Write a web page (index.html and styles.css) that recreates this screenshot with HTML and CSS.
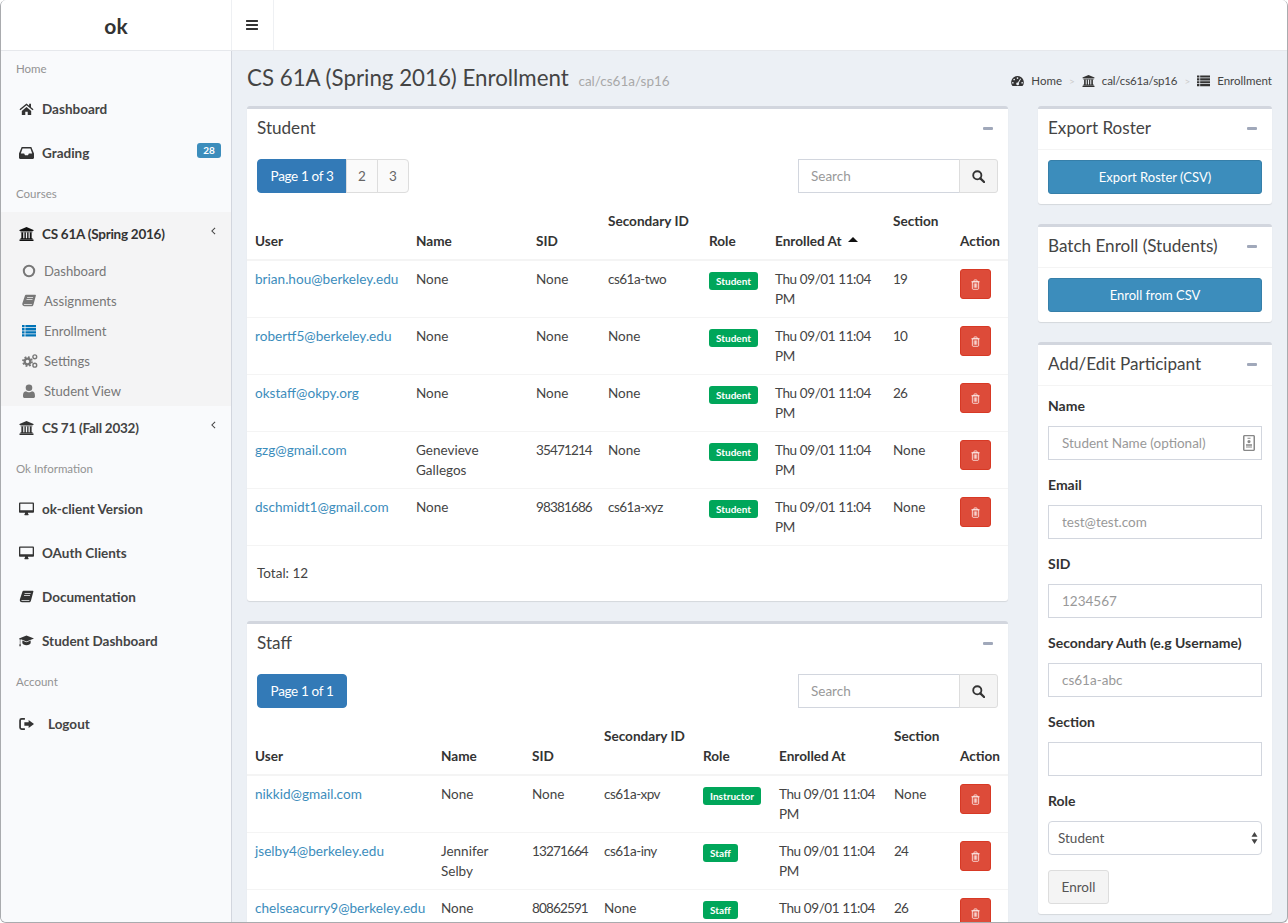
FILE: index.html
```html
<!DOCTYPE html>
<html lang="en">
<head>
<meta charset="utf-8">
<title>CS 61A Enrollment</title>
<link rel="stylesheet" href="styles.css">
</head>
<body>
<svg class="sprite" aria-hidden="true">
  <symbol id="i-bars" viewBox="0 0 1536 1792"><path d="M1536 1344v128q0 26-19 45t-45 19H64q-26 0-45-19t-19-45v-128q0-26 19-45t45-19h1408q26 0 45 19t19 45zm0-512v128q0 26-19 45t-45 19H64q-26 0-45-19T0 960V832q0-26 19-45t45-19h1408q26 0 45 19t19 45zm0-512v128q0 26-19 45t-45 19H64q-26 0-45-19T0 448V320q0-26 19-45t45-19h1408q26 0 45 19t19 45z"/></symbol>
  <symbol id="i-home" viewBox="0 0 16 14"><path d="M8 1 .5 7.3l1 1.1L8 3l6.5 5.4 1-1.1-2.7-2.2V1.5h-2v1.9L8 1zM3 9.2v4.3h3.7V10h2.6v3.5H13V9.2L8 4.9 3 9.2z"/></symbol>
  <symbol id="i-inbox" viewBox="0 0 14 12"><path fill-rule="evenodd" d="M2.5.5h9L14 6.5v4a1 1 0 0 1-1 1H1a1 1 0 0 1-1-1v-4L2.500.5zM3.300 1.800 1.700 6.500h3.100l.8 1.600h2.800l.8-1.600h3.100l-1.600-4.700H3.300z"/></symbol>
  <symbol id="i-bank" viewBox="0 0 16 15"><path d="M8 0l7.500 3.200v1H.5v-1L8 0zM1.500 4.700h13v1h-13zM2.500 6h2v6h-2zM5.800 6h1.500v6H5.800zM8.700 6h1.500v6H8.700zM11.500 6h2v6h-2zM1.500 12h13v1.100h-13zM.5 13.500h15V15H.5z"/></symbol>
  <symbol id="i-circle" viewBox="0 0 14 14"><circle cx="7" cy="7" r="5.200" fill="none" stroke="currentColor" stroke-width="2"/></symbol>
  <symbol id="i-book" viewBox="0 0 14 14"><path fill-rule="evenodd" d="M4 .8h9.300c.5 0 .7.400.6.800l-2.400 8.800c-.3 1.200-1 1.900-2.200 1.900H2.600C1 12.300-.1 11 .4 9.300L2.900 1.700C3.100 1.100 3.500.8 4 .8zM5.200 3l-.2.800h6l.2-.8h-6zM4.600 5l-.2.800h6l.2-.8h-6zM2.300 10.200c-.5 0-.7.900 0 .9h7.400l.3-.9H2.300z"/></symbol>
  <symbol id="i-list" viewBox="0 0 14 12"><path d="M0 0h2.600v2.300H0zM3.400 0H14v2.300H3.400zM0 3.100h2.600v2.300H0zM3.400 3.100H14v2.300H3.400zM0 6.200h2.600v2.300H0zM3.400 6.200H14v2.300H3.400zM0 9.300h2.600v2.300H0zM3.400 9.300H14v2.300H3.400z"/></symbol>
  <symbol id="i-cogs" viewBox="0 0 16 14"><g fill="none" stroke="currentColor"><circle cx="5.500" cy="7.500" r="2.800" stroke-width="2.200"/><circle cx="5.500" cy="7.500" r="4.500" stroke-width="1.800" stroke-dasharray="1.800 1.730"/><circle cx="12.800" cy="2.800" r="1.900" stroke-width="1.400"/><circle cx="12.800" cy="11.200" r="1.900" stroke-width="1.400"/></g></symbol>
  <symbol id="i-user" viewBox="0 0 12 14"><circle cx="6" cy="3.700" r="3.300"/><path d="M1.800 14C.6 14 0 13.300 0 12.200 0 9.700.5 7.300 3.100 7.200c.7.700 1.800 1.100 2.900 1.100s2.200-.4 2.900-1.100C11.500 7.300 12 9.700 12 12.200c0 1.100-.6 1.800-1.800 1.800H1.800z"/></symbol>
  <symbol id="i-desktop" viewBox="0 0 16 14"><path fill-rule="evenodd" d="M1.200 0h13.600c.7 0 1.200.5 1.200 1.200v8.600c0 .7-.5 1.200-1.200 1.200H9.500c0 1 .8 1.600.8 2.100 0 .3-.3.5-.5.5H6.200c-.3 0-.5-.2-.5-.5 0-.5.8-1.100.8-2.100H1.200C.5 11 0 10.500 0 9.800V1.200C0 .5.5 0 1.200 0zm.2 1.400v6.800h13.200V1.400H1.400z"/></symbol>
  <symbol id="i-cap" viewBox="0 0 18 13"><path d="M9 0l9 3.500L9 7 2.300 4.400 1.600 5v5.200H1V4.900l-1-1.400L9 0zM4 6l5 2 5-2v3c0 1.500-2.500 2.500-5 2.500S4 10.500 4 9V6zM.7 10.200h1.200l.3 2.500H.4l.3-2.500z"/></symbol>
  <symbol id="i-signout" viewBox="0 0 14 12"><path d="M9 2.300 14 6 9 9.700V7.600H5V4.400h4V2.300z"/><path d="M5.500 1.200h-3c-1 0-1.500.5-1.500 1.500v6.600c0 1 .5 1.500 1.500 1.500h3" fill="none" stroke="currentColor" stroke-width="1.600"/></symbol>
  <symbol id="i-gauge" viewBox="0 0 14 12"><path fill-rule="evenodd" d="M7 .5a6.900 6.900 0 0 0-5.400 11h10.800A6.900 6.900 0 0 0 7 .5zM7 2a.9.9 0 1 1 0 1.800A.9.900 0 0 1 7 2zM3.400 3.500a.9.900 0 1 1 0 1.800.9.900 0 0 1 0-1.800zM2 7a.9.900 0 1 1 0 1.800A.9.900 0 0 1 2 7zm10 0a.9.900 0 1 1 0 1.800A.9.900 0 0 1 12 7zM10 3.400l.8.500-2.500 4.200a1.500 1.500 0 1 1-.9-.5L10 3.400z"/></symbol>
  <symbol id="i-search" viewBox="0 0 14 14"><circle cx="5.700" cy="5.700" r="4.400" fill="none" stroke="currentColor" stroke-width="2"/><path d="M9 9l4 4" stroke="currentColor" stroke-width="2.400" stroke-linecap="round"/></symbol>
  <symbol id="i-trash" viewBox="0 0 12 14"><path d="M1.800 3.500h8.400v8.700c0 .7-.4 1.200-1 1.200H2.800c-.6 0-1-.5-1-1.200V3.500zM.5 3.300h11M4 3V1.700c0-.5.300-.8.700-.8h2.600c.4 0 .7.300.7.800V3M4.300 5.500v5.800M6 5.500v5.800M7.700 5.500v5.800" fill="none" stroke="currentColor"/></symbol>
  <symbol id="i-contact" viewBox="0 0 12 16"><path fill-rule="evenodd" d="M1.500 0h9c.8 0 1.500.7 1.500 1.500v13c0 .8-.7 1.500-1.500 1.500h-9C.7 16 0 15.300 0 14.500v-13C0 .7.700 0 1.500 0zm0 1.300v13.400h9V1.300h-9z"/><path d="M4.500 2.800h3v1h-3zM6 5a1.600 1.600 0 1 1 0 3.200A1.600 1.600 0 0 1 6 5zM3 9.200h6v1.500H3zM3 11.500h6v1H3z"/></symbol>
</svg>

<div class="window">
  <header class="topbar">
    <div class="brand">ok</div>
    <button class="toggle" type="button"><svg class="ic ic-bars"><use href="#i-bars"/></svg></button>
  </header>
  <div class="shell">
    <nav class="sidebar">
      <div class="nav-label nav-label-first">Home</div>
      <a class="nav-item"><svg class="ic ic-nav"><use href="#i-home"/></svg><span>Dashboard</span></a>
      <a class="nav-item"><svg class="ic ic-nav"><use href="#i-inbox"/></svg><span>Grading</span><em class="count">28</em></a>
      <div class="nav-label">Courses</div>
      <div class="course-open">
        <a class="nav-item nav-item-dark"><svg class="ic ic-nav"><use href="#i-bank"/></svg><span class="course-name">CS 61A (Spring 2016)</span><svg class="chev" viewBox="0 0 6 10"><path d="M5 1 1 5l4 4"/></svg></a>
        <a class="sub-item"><svg class="ic ic-sub"><use href="#i-circle"/></svg><span>Dashboard</span></a>
        <a class="sub-item"><svg class="ic ic-sub"><use href="#i-book"/></svg><span>Assignments</span></a>
        <a class="sub-item"><svg class="ic ic-sub ic-blue"><use href="#i-list"/></svg><span>Enrollment</span></a>
        <a class="sub-item"><svg class="ic ic-sub ic-cogs"><use href="#i-cogs"/></svg><span>Settings</span></a>
        <a class="sub-item"><svg class="ic ic-sub"><use href="#i-user"/></svg><span>Student View</span></a>
      </div>
      <a class="nav-item"><svg class="ic ic-nav"><use href="#i-bank"/></svg><span class="course-name">CS 71 (Fall 2032)</span><svg class="chev" viewBox="0 0 6 10"><path d="M5 1 1 5l4 4"/></svg></a>
      <div class="nav-label">Ok Information</div>
      <a class="nav-item"><svg class="ic ic-nav"><use href="#i-desktop"/></svg><span>ok-client Version</span></a>
      <a class="nav-item"><svg class="ic ic-nav"><use href="#i-desktop"/></svg><span>OAuth Clients</span></a>
      <a class="nav-item"><svg class="ic ic-nav"><use href="#i-book"/></svg><span>Documentation</span></a>
      <a class="nav-item"><svg class="ic ic-nav"><use href="#i-cap"/></svg><span>Student Dashboard</span></a>
      <div class="nav-label nav-label-last">Account</div>
      <a class="nav-item nav-item-logout"><svg class="ic ic-nav"><use href="#i-signout"/></svg><span>Logout</span></a>
    </nav>

    <main class="content">
      <div class="page-head">
        <h1>CS 61A (Spring 2016) Enrollment <small>cal/cs61a/sp16</small></h1>
        <ol class="crumbs">
          <li><svg class="ic ic-crumb"><use href="#i-gauge"/></svg>Home</li>
          <li class="sep">&gt;</li>
          <li class="crumb-path"><svg class="ic ic-crumb"><use href="#i-bank"/></svg>cal/cs61a/sp16</li>
          <li class="sep">&gt;</li>
          <li><svg class="ic ic-crumb"><use href="#i-list"/></svg>Enrollment</li>
        </ol>
      </div>
      <div class="columns">
        <div class="col-main">
          <section class="card">
            <div class="card-head"><h2>Student</h2><span class="collapse"></span></div>
            <div class="tools">
              <div class="pager"><span class="pg pg-on">Page 1 of 3</span><span class="pg">2</span><span class="pg">3</span></div>
              <div class="search"><input type="text" placeholder="Search"><button type="button"><svg class="ic ic-search"><use href="#i-search"/></svg></button></div>
            </div>
            <table class="grid grid-student">
              <colgroup><col class="c1"><col class="c2"><col class="c3"><col class="c4"><col class="c5"><col class="c6"><col class="c7"><col class="c8"></colgroup>
              <thead><tr><th>User</th><th>Name</th><th>SID</th><th class="th-up">Secondary ID</th><th>Role</th><th>Enrolled At <i class="sort"></i></th><th class="th-up">Section</th><th>Action</th></tr></thead>
              <tbody>
                <tr><td><a>brian.hou@berkeley.edu</a></td><td>None</td><td>None</td><td class="sec">cs61a-two</td><td><b class="tag">Student</b></td><td class="when">Thu 09/01 11:04 PM</td><td class="num">19</td><td><button class="del" type="button"><svg class="ic ic-trash"><use href="#i-trash"/></svg></button></td></tr>
                <tr><td><a>robertf5@berkeley.edu</a></td><td>None</td><td>None</td><td>None</td><td><b class="tag">Student</b></td><td class="when">Thu 09/01 11:04 PM</td><td class="num">10</td><td><button class="del" type="button"><svg class="ic ic-trash"><use href="#i-trash"/></svg></button></td></tr>
                <tr><td><a>okstaff@okpy.org</a></td><td>None</td><td>None</td><td>None</td><td><b class="tag">Student</b></td><td class="when">Thu 09/01 11:04 PM</td><td class="num">26</td><td><button class="del" type="button"><svg class="ic ic-trash"><use href="#i-trash"/></svg></button></td></tr>
                <tr><td><a>gzg@gmail.com</a></td><td>Genevieve Gallegos</td><td class="num">35471214</td><td>None</td><td><b class="tag">Student</b></td><td class="when">Thu 09/01 11:04 PM</td><td>None</td><td><button class="del" type="button"><svg class="ic ic-trash"><use href="#i-trash"/></svg></button></td></tr>
                <tr><td><a>dschmidt1@gmail.com</a></td><td>None</td><td class="num">98381686</td><td class="sec">cs61a-xyz</td><td><b class="tag">Student</b></td><td class="when">Thu 09/01 11:04 PM</td><td>None</td><td><button class="del" type="button"><svg class="ic ic-trash"><use href="#i-trash"/></svg></button></td></tr>
              </tbody>
            </table>
            <div class="total">Total: 12</div>
          </section>

          <section class="card">
            <div class="card-head"><h2>Staff</h2><span class="collapse"></span></div>
            <div class="tools">
              <div class="pager"><span class="pg pg-on pg-solo">Page 1 of 1</span></div>
              <div class="search"><input type="text" placeholder="Search"><button type="button"><svg class="ic ic-search"><use href="#i-search"/></svg></button></div>
            </div>
            <table class="grid grid-staff">
              <colgroup><col class="c1"><col class="c2"><col class="c3"><col class="c4"><col class="c5"><col class="c6"><col class="c7"><col class="c8"></colgroup>
              <thead><tr><th>User</th><th>Name</th><th>SID</th><th class="th-up">Secondary ID</th><th>Role</th><th>Enrolled At</th><th class="th-up">Section</th><th>Action</th></tr></thead>
              <tbody>
                <tr><td><a>nikkid@gmail.com</a></td><td>None</td><td>None</td><td class="sec">cs61a-xpv</td><td><b class="tag">Instructor</b></td><td class="when">Thu 09/01 11:04 PM</td><td>None</td><td><button class="del" type="button"><svg class="ic ic-trash"><use href="#i-trash"/></svg></button></td></tr>
                <tr><td><a>jselby4@berkeley.edu</a></td><td>Jennifer Selby</td><td class="num">13271664</td><td class="sec">cs61a-iny</td><td><b class="tag">Staff</b></td><td class="when">Thu 09/01 11:04 PM</td><td class="num">24</td><td><button class="del" type="button"><svg class="ic ic-trash"><use href="#i-trash"/></svg></button></td></tr>
                <tr><td><a>chelseacurry9@berkeley.edu</a></td><td>None</td><td class="num">80862591</td><td>None</td><td><b class="tag">Staff</b></td><td class="when">Thu 09/01 11:04 PM</td><td class="num">26</td><td><button class="del" type="button"><svg class="ic ic-trash"><use href="#i-trash"/></svg></button></td></tr>
              </tbody>
            </table>
          </section>
        </div>

        <aside class="col-side">
          <section class="card">
            <div class="card-head card-head-line"><h2>Export Roster</h2><span class="collapse"></span></div>
            <div class="card-body"><button class="btn-blue" type="button">Export Roster (CSV)</button></div>
          </section>
          <section class="card">
            <div class="card-head card-head-line"><h2>Batch Enroll (Students)</h2><span class="collapse"></span></div>
            <div class="card-body"><button class="btn-blue" type="button">Enroll from CSV</button></div>
          </section>
          <section class="card">
            <div class="card-head card-head-line"><h2>Add/Edit Participant</h2><span class="collapse"></span></div>
            <form class="card-body form">
              <div class="field"><label>Name</label><div class="with-icon"><input type="text" placeholder="Student Name (optional)"><svg class="ic ic-contact"><use href="#i-contact"/></svg></div></div>
              <div class="field"><label>Email</label><input type="text" placeholder="test@test.com"></div>
              <div class="field"><label>SID</label><input type="text" placeholder="1234567"></div>
              <div class="field"><label>Secondary Auth (e.g Username)</label><input type="text" placeholder="cs61a-abc"></div>
              <div class="field"><label>Section</label><input type="text"></div>
              <div class="field"><label>Role</label><div class="with-icon"><select><option>Student</option></select><svg class="updown" viewBox="0 0 8 14"><path d="M4 0l3.500 5.500h-7zM4 14 .5 8.500h7z"/></svg></div></div>
              <button class="btn-plain" type="button">Enroll</button>
            </form>
          </section>
        </aside>
      </div>
    </main>
  </div>
</div>
</body>
</html>
```

FILE: styles.css
```css
* { box-sizing: border-box; }
html, body { margin: 0; height: 100%; overflow: hidden; }
body { background: #fff; font-family: "Lato", "Noto Sans", sans-serif; font-size: 14px; line-height: 20px; color: #444; }
a { color: inherit; text-decoration: none; }
.sprite { display: none; }
.ic { display: block; flex: none; fill: currentColor; }

.window { width: 1288px; height: 923px; display: flex; flex-direction: column; overflow: hidden; border: 1px solid #a9abae; border-width: 0 1px 1px; border-radius: 6px; background: #ecf0f5; }

.topbar { height: 51px; flex: none; display: flex; background: #fff; border-bottom: 1px solid #e6e8ec; }
.brand { width: 230px; text-align: center; font-size: 21px; font-weight: 700; line-height: 51px; color: #333; }
.toggle { width: 43px; padding: 0 1px 0 0; display: flex; align-items: center; justify-content: center; background: #fff; border: solid #eef0f3; border-width: 0 1px; color: #333; }
.ic-bars { width: 12px; height: 14px; }

.shell { flex: 1; display: flex; min-height: 0; }
.sidebar { width: 231px; flex: none; background: #f9fafc; border-right: 1px solid #d2d6de; }
.nav-label { height: 37px; padding-left: 15px; font-size: 11.500px; line-height: 37px; color: #939393; }
.nav-label-first { height: 36px; line-height: 36px; }
.nav-label-last { height: 39px; }
.nav-item { height: 44px; display: flex; align-items: center; padding: 0 10px 0 18px; font-size: 13.500px; font-weight: 700; color: #444; }
.nav-item-dark { color: #333; }
.nav-item-dark .ic { color: #111; }
.course-name { letter-spacing: -.25px; }
.ic-nav { width: 15px; height: 14px; margin-right: 8px; color: #333; }
.nav-item-logout .ic-nav { margin-right: 14px; }
.count { margin-left: auto; margin-bottom: 6px; width: 24px; height: 15px; background: #3c8dbc; color: #fff; border-radius: 3px; font-size: 10px; font-weight: 700; font-style: normal; line-height: 15px; text-align: center; }
.chev { margin-left: auto; margin-right: 5px; margin-bottom: 6px; width: 5px; height: 8px; fill: none; stroke: #444; stroke-width: 1.300; }
.course-open { background: #f4f4f5; height: 194px; }
.sub-item { height: 30px; display: flex; align-items: center; padding-left: 21px; font-size: 13.100px; color: #777; }
.ic-sub { width: 14px; height: 14px; margin-right: 8px; color: #777; }
.ic-cogs { width: 16px; margin-right: 6px; }
.ic-blue { color: #0073b7; }

.content { flex: 1; min-width: 0; padding: 0 15px; }
.page-head { height: 55px; display: flex; align-items: center; justify-content: space-between; }
h1 { margin: 1px 0 0; font-size: 22.300px; font-weight: 400; line-height: 54px; color: #444; }
h1 small { margin-left: 4px; font-size: 13.500px; color: #a8a8a8; }
.crumbs { margin: 4px 0 0; padding: 0; display: flex; align-items: center; list-style: none; font-size: 11.500px; color: #444; }
.crumbs li { display: flex; align-items: center; }
.crumbs .sep { margin: 0 7px; color: #ccc; font-size: 10px; }
.crumbs .crumb-path { letter-spacing: -.15px; }
.ic-crumb { width: 13px; height: 12px; margin-right: 7px; color: #333; }

.columns { display: flex; gap: 30px; align-items: flex-start; }
.col-main { width: 761px; flex: none; }
.col-side { width: 234px; flex: none; }
.card { background: #fff; border-top: 3px solid #d2d6de; border-radius: 3px; box-shadow: 0 1px 1px rgba(0,0,0,.1); margin-bottom: 20px; }
.card-head { height: 40px; display: flex; align-items: center; justify-content: space-between; padding: 0 15px 1px 10px; }
.card-head-line { height: 41px; border-bottom: 1px solid #f4f4f4; }
h2 { margin: 0 0 1px; font-size: 17.100px; font-weight: 400; color: #444; }
.collapse { width: 10px; height: 3px; background: #a0a8ba; border-radius: 1px; }
.card-body { padding: 10px; }

.tools { height: 53px; padding: 10px 10px 0; display: flex; justify-content: space-between; }
.pager { display: flex; height: 34px; }
.pg { width: 32px; text-align: center; line-height: 32px; font-size: 13.500px; color: #666; background: #fafafa; border: 1px solid #ddd; margin-left: -1px; }
.pg:last-child { border-radius: 0 4px 4px 0; }
.pg-on { width: 90px; margin-left: 0; letter-spacing: -.35px; background: #337ab7; border-color: #337ab7; color: #fff; border-radius: 4px 0 0 4px; }
.pg-solo:last-child { border-radius: 4px; }
.search { display: flex; width: 200px; height: 34px; }
.search input { width: 162px; height: 34px; padding: 0 12px; border: 1px solid #d2d6de; font: inherit; font-size: 13.500px; background: #fff; outline: 0; }
.search button { width: 39px; height: 34px; display: flex; align-items: center; justify-content: center; padding: 0; margin-left: -1px; background: #f4f4f4; border: 1px solid #ddd; border-radius: 0 3px 3px 0; color: #333; }
.ic-search { width: 13px; height: 13px; }
input::placeholder { color: #999; opacity: 1; }

.grid { width: 761px; table-layout: fixed; border-collapse: collapse; }
.grid th { padding: 8px; height: 58px; vertical-align: bottom; text-align: left; font-size: 13.600px; font-weight: 700; color: #333; border-bottom: 2px solid #f4f4f4; }
.grid th.th-up { padding-bottom: 28px; }
.grid td { padding: 8px; vertical-align: top; font-size: 13.500px; border-top: 1px solid #f4f4f4; }
.grid tbody tr:first-child td { border-top: 0; }
.grid td a { color: #3c8dbc; font-size: 13.600px; white-space: nowrap; }
.grid td.num { letter-spacing: -.85px; }
.grid td.when { letter-spacing: -.4px; }
.grid td.sec { letter-spacing: -.5px; }
.grid td:last-child, .grid th:last-child { padding-right: 0; white-space: nowrap; }
.grid-student .c1 { width: 161px; } .grid-student .c2 { width: 120px; } .grid-student .c3 { width: 72px; } .grid-student .c4 { width: 101px; }
.grid-student .c5 { width: 66px; } .grid-student .c6 { width: 118px; } .grid-student .c7 { width: 67px; } .grid-student .c8 { width: 56px; }
.grid-staff .c1 { width: 186px; } .grid-staff .c2 { width: 91px; } .grid-staff .c3 { width: 72px; } .grid-staff .c4 { width: 99px; }
.grid-staff .c5 { width: 76px; } .grid-staff .c6 { width: 115px; } .grid-staff .c7 { width: 66px; } .grid-staff .c8 { width: 56px; }
.sort { display: inline-block; margin-left: 3px; vertical-align: 4px; border: solid transparent; border-width: 0 5px 5px; border-bottom-color: #111; }
.tag { display: inline-block; height: 18px; padding: 0 7px; margin-top: 3px; background: #00a65a; color: #fff; border-radius: 3px; font-size: 10px; font-weight: 700; line-height: 18px; vertical-align: top; }
.del { width: 31px; height: 30px; display: flex; align-items: center; justify-content: center; padding: 0; background: #dd4b39; border: 1px solid #d73925; border-radius: 3px; color: #fff; }
.ic-trash { width: 9px; height: 11px; }
.total { padding: 17px 10px 18px; font-size: 13.500px; border-top: 1px solid #f4f4f4; }

.btn-blue { display: block; width: 100%; height: 34px; padding: 0; background: #3c8dbc; border: 1px solid #367fa9; border-radius: 3px; color: #fff; font: inherit; font-size: 13px; }
.field { margin-bottom: 15px; }
.field label { display: block; margin-bottom: 10px; font-size: 14px; font-weight: 700; color: #333; }
.field input, .field select { display: block; width: 100%; height: 34px; padding: 0 13px; background: #fff; border: 1px solid #d2d6de; font: inherit; font-size: 13.500px; color: #555; outline: 0; border-radius: 0; }
.field select { appearance: none; padding: 0 9px; border-radius: 4px; }
.with-icon { position: relative; }
.ic-contact { position: absolute; right: 7px; top: 9px; width: 12px; height: 16px; color: #888; }
.updown { position: absolute; right: 4px; top: 11px; width: 7px; height: 12px; fill: #444; }
.btn-plain { display: block; width: 61px; height: 34px; padding: 0; background: #f4f4f4; border: 1px solid #ddd; border-radius: 3px; color: #555; font: inherit; font-size: 13.500px; }
```
